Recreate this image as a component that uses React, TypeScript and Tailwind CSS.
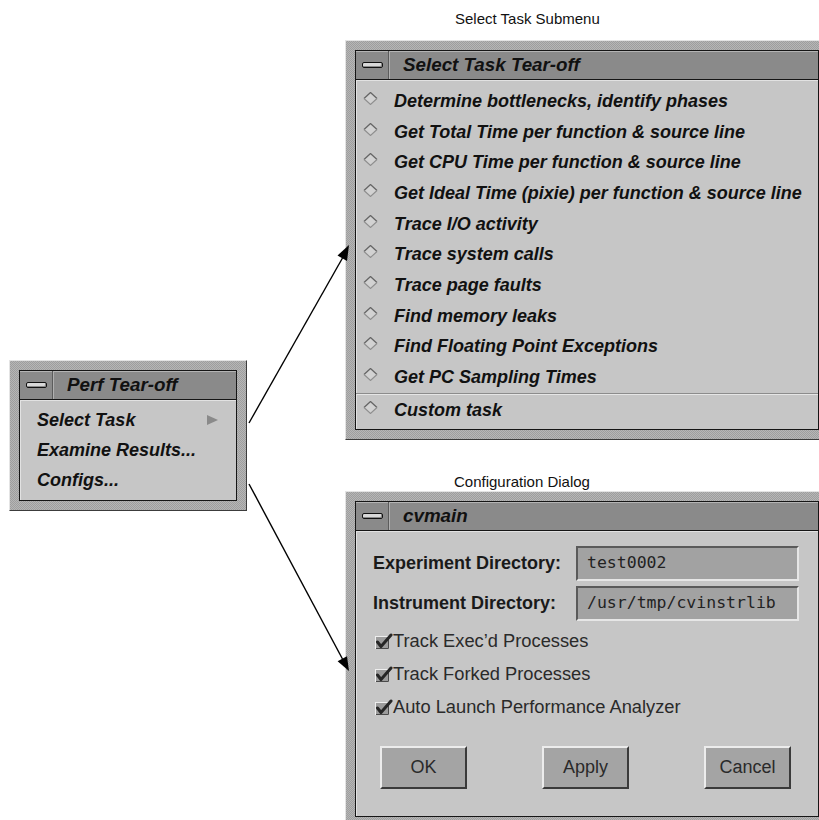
import type { ReactNode } from 'react'

const sans = "font-['Liberation_Sans',Arial,sans-serif]"

function MenuBar() {
  return (
    <span className="block w-[21px] h-[6px] rounded-[2px] border border-[#111] bg-[#d8d8d8] shadow-[inset_-1px_-1px_0_#8a8a8a]" />
  )
}

function Win({ title, className, children }: { title: string; className: string; children: ReactNode }) {
  return (
    <div
      className={`absolute flex flex-col border border-t-[#e4e4e4] border-l-[#e4e4e4] border-r-[#3c3c3c] border-b-[#3c3c3c] bg-[repeating-conic-gradient(#9e9e9e_0_25%,#b6b6b6_0_50%)] bg-[length:2px_2px] p-[9px] ${className}`}
    >
      <div className="flex flex-1 flex-col border border-[#151515] min-h-0">
        <div className="flex h-[29px] shrink-0 bg-[#8a8a8a] border-b border-[#151515] shadow-[inset_0_1px_0_#b4b4b4]">
          <div className="flex w-[33px] items-center justify-center border-r border-r-[#5c5c5c] shadow-[1px_0_0_#b0b0b0]">
            <MenuBar />
          </div>
          <div className="flex items-center pl-[14px] text-[18.8px] font-bold italic text-[#111]">{title}</div>
        </div>
        <div className="flex-1 bg-[#c6c6c6] shadow-[inset_1px_1px_0_#e2e2e2]">{children}</div>
      </div>
    </div>
  )
}

function Diamond() {
  return (
    <svg width="15" height="13" viewBox="0 0 15 13" className="shrink-0">
      <polygon points="7.5,0.5 14,6.5 7.5,12.5 1,6.5" fill="#d2d2d2" />
      <polyline points="1,6.5 7.5,0.5 14,6.5" fill="none" stroke="#656565" strokeWidth="1.3" />
      <polyline points="1,6.5 7.5,12.5 14,6.5" fill="none" stroke="#8e8e8e" strokeWidth="1.1" />
    </svg>
  )
}

function Check() {
  return (
    <svg width="19" height="18" viewBox="0 0 19 18" className="shrink-0">
      <rect x="1.5" y="4.5" width="13" height="12" fill="#9c9c9c" stroke="#eeeeee" strokeWidth="1" />
      <path d="M2 16.5 H14.5 V5" fill="none" stroke="#4a4a4a" strokeWidth="1" />
      <path d="M3.5 10 L7 14.5 L17 3" fill="none" stroke="#262626" strokeWidth="3" strokeLinejoin="round" strokeLinecap="round" />
    </svg>
  )
}

function Btn({ label }: { label: string }) {
  return (
    <div className="flex h-[43px] w-[87px] items-center justify-center border-2 border-t-[#ececec] border-l-[#ececec] border-r-[#3a3a3a] border-b-[#3a3a3a] bg-[#a4a4a4] text-[18px] text-[#2a2a2a]">
      {label}
    </div>
  )
}

function Field({ value }: { value: string }) {
  return (
    <div className="flex h-[35px] w-[223px] items-center border-2 border-t-[#5a5a5a] border-l-[#5a5a5a] border-r-[#e6e6e6] border-b-[#e6e6e6] bg-[#a2a2a2] pl-[9px] font-['DejaVu_Sans_Mono',monospace] text-[16.5px] text-[#222]">
      {value}
    </div>
  )
}

const tasks = [
  'Determine bottlenecks, identify phases',
  'Get Total Time per function & source line',
  'Get CPU Time per function & source line',
  'Get Ideal Time (pixie) per function & source line',
  'Trace I/O activity',
  'Trace system calls',
  'Trace page faults',
  'Find memory leaks',
  'Find Floating Point Exceptions',
  'Get PC Sampling Times',
]

export default function App() {
  return (
    <div className={`relative w-[819px] h-[820px] overflow-hidden bg-white ${sans}`}>
      <div className="absolute left-[455px] top-[8px] text-[15px] text-[#111]">Select Task Submenu</div>
      <div className="absolute left-[454px] top-[471px] text-[15px] text-[#111]">Configuration Dialog</div>

      {/* perf tear-off */}
      <Win title="Perf Tear-off" className="left-[9px] top-[360px] w-[238px] h-[151px]">
        <div className="flex flex-col pt-[5px] text-[18px] font-bold italic text-[#111]">
          <div className="flex h-[30px] items-center pl-[17px] pr-[18px]">
            <span className="flex-1">Select Task</span>
            <svg width="11" height="10" viewBox="0 0 11 10">
              <polygon points="0,0 11,5 0,10" fill="#8a8a8a" />
            </svg>
          </div>
          <div className="flex h-[30px] items-center pl-[17px]">Examine Results...</div>
          <div className="flex h-[30px] items-center pl-[17px]">Configs...</div>
        </div>
      </Win>

      {/* select task tear-off */}
      <Win title="Select Task Tear-off" className="left-[345px] top-[40px] w-[484px] h-[400px]">
        <div className="flex flex-col pt-[6px] text-[18px] font-bold italic text-[#111]">
          {tasks.map((t) => (
            <div key={t} className="flex h-[30.7px] items-center gap-[16px] pl-[7px] whitespace-nowrap">
              <span className="-mt-[6px]"><Diamond /></span>
              <span>{t}</span>
            </div>
          ))}
          <div className="h-[2px] border-t border-[#8c8c8c] border-b border-b-[#e6e6e6]" />
          <div className="flex h-[31px] items-center gap-[16px] pl-[7px]">
            <span className="-mt-[6px]"><Diamond /></span>
            <span>Custom task</span>
          </div>
        </div>
      </Win>

      {/* cvmain config dialog */}
      <Win title="cvmain" className="left-[345px] top-[491px] w-[484px] h-[336px]">
        <div className="flex flex-col pt-[15px] text-[18px] text-[#1a1a1a]">
          <div className="flex flex-col gap-[5px] pl-[17px]">
            <div className="flex items-center">
              <span className="w-[203px] font-bold">Experiment Directory:</span>
              <Field value="test0002" />
            </div>
            <div className="flex items-center">
              <span className="w-[203px] font-bold">Instrument Directory:</span>
              <Field value="/usr/tmp/cvinstrlib" />
            </div>
          </div>
          <div className="mt-[3px] flex flex-col pl-[18px]">
            {['Track Exec\u2019d Processes', 'Track Forked Processes', 'Auto Launch Performance Analyzer'].map((c) => (
              <div key={c} className="flex h-[33px] items-center">
                <Check />
                <span className="text-[18.3px] text-[#2a2a2a]">{c}</span>
              </div>
            ))}
          </div>
          <div className="mt-[23px] flex gap-[75px] pl-[24px]">
            <Btn label="OK" />
            <Btn label="Apply" />
            <Btn label="Cancel" />
          </div>
        </div>
      </Win>

      <svg className="absolute inset-0 pointer-events-none" width="819" height="820">
        <line x1="249" y1="423" x2="342.5" y2="258" stroke="#000" strokeWidth="1.4" />
        <polygon points="349,245 347,261 337.5,255.6" fill="#000" />
        <line x1="249" y1="484" x2="342.5" y2="659" stroke="#000" strokeWidth="1.4" />
        <polygon points="349,671 337.6,661.3 347,656.3" fill="#000" />
      </svg>
    </div>
  )
}
